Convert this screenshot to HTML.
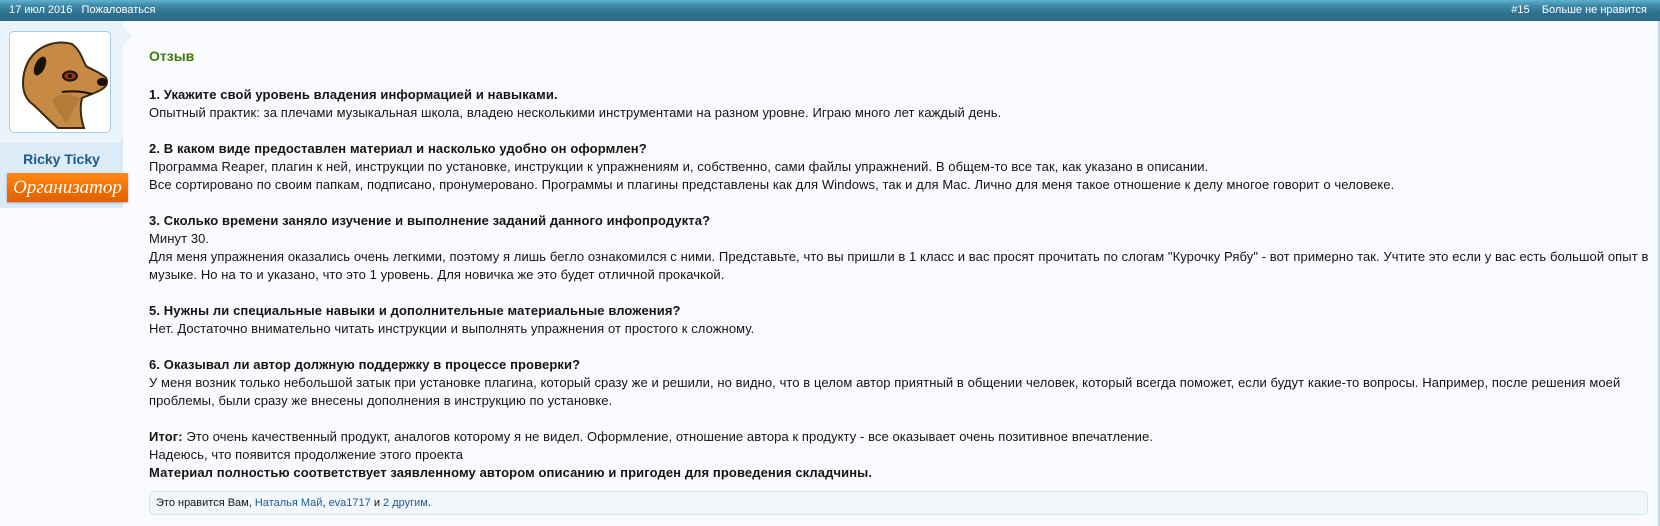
<!DOCTYPE html>
<html><head><meta charset="utf-8"><style>
*{margin:0;padding:0;box-sizing:border-box}
body{width:1660px;height:526px;background:#fafbfe;font-family:"Liberation Sans",Arial,sans-serif;position:relative;overflow:hidden;color:#141414}
.bar{position:absolute;left:0;top:0;width:1660px;height:21px;background:linear-gradient(#5fb3cf 0,#3f8bab 25%,#2f7190 60%,#2c6a89 100%);color:#fff;font-size:11px;line-height:21px}
.bar .l{position:absolute;left:9px}
.bar .r{position:absolute;right:13px}
.side{position:absolute;left:0;top:21px;width:123px;height:187px;background:#dcebf8}
.top{position:absolute;left:0;top:0;width:123px;height:122px;background:#e9f3fc;border-radius:0 0 8px 0}
.av{position:absolute;left:9px;top:10px;width:102px;height:102px;background:#fff;border:1px solid #a9c9e4;border-radius:5px}
.name{position:absolute;left:0;top:130px;width:123px;text-align:center;font-weight:bold;font-size:14px;color:#1d5a88}
.badge{position:absolute;left:7px;top:152px;width:121px;height:29px;background:linear-gradient(#ff8a1a,#f06c00 60%,#e06000);color:#fff;font-family:"Liberation Serif",serif;font-style:italic;font-size:19px;text-align:center;line-height:29px;box-shadow:0 1px 2px rgba(0,0,0,.3)}
.arrow{position:absolute;left:123px;top:26px;width:0;height:0;border-top:10px solid transparent;border-bottom:10px solid transparent;border-left:9px solid #e9f3fc}
.rline{position:absolute;left:1658px;top:21px;width:2px;height:505px;background:#c5d6e6}
.c{position:absolute;left:149px;top:0;width:1500px;font-size:13px;line-height:18px}
.t{position:absolute;top:47px;left:0;color:#417b06;font-size:14px;font-weight:bold}
.txt{position:absolute;top:86px;left:0;width:1500px;letter-spacing:0.08px}
.txt b{font-weight:bold;letter-spacing:0.1px}
.like{position:absolute;left:149px;top:491px;width:1499px;height:24px;border:1px solid #d4e4f3;border-radius:5px;background:#f2f7fc;font-size:11px;line-height:22px;padding-left:6px}
.like a{color:#1d5a96;text-decoration:none}
</style></head><body>
<div class="bar"><span class="l">17 июл 2016&nbsp;&nbsp;&nbsp;Пожаловаться</span><span class="r">#15&nbsp;&nbsp;&nbsp;&nbsp;Больше не нравится</span></div>
<div class="side"><div class="top"></div>
<div class="av"><svg width="100" height="100" viewBox="0 0 100 100">
<path d="M62 12 C48 8 28 12 18 30 C12 42 10 60 20 70 C30 78 38 88 48 96 L74 96 C70 84 70 74 72 66 L82 62 C92 58 100 54 96 46 C90 40 82 38 76 34 C72 26 70 18 62 12Z" fill="#c68a45" stroke="#3a2a10" stroke-width="2"/>
<path d="M70 66 C60 62 50 60 44 66 C40 70 50 80 56 92" fill="#a67233" opacity=".6"/>
<ellipse cx="30" cy="34" rx="5" ry="10" fill="#1a1208" transform="rotate(25 30 34)"/>
<ellipse cx="60" cy="44" rx="7" ry="4.5" fill="#8a3a10" stroke="#1a1208" stroke-width="2"/>
<circle cx="60" cy="44" r="2" fill="#1a1208"/>
<ellipse cx="92" cy="50" rx="5" ry="4" fill="#1a1208"/>
<path d="M52 60 Q68 58 82 62" stroke="#1a1208" stroke-width="2" fill="none"/>
</svg></div>
<div class="name">Ricky Ticky</div>
<div class="badge">Организатор</div>
</div>
<div class="arrow"></div>
<div class="rline"></div>
<div class="c">
<div class="t">Отзыв</div>
<div class="txt">
<b>1. Укажите свой уровень владения информацией и навыками.</b><br>
Опытный практик: за плечами музыкальная школа, владею несколькими инструментами на разном уровне. Играю много лет каждый день.<br><br>
<b>2. В каком виде предоставлен материал и насколько удобно он оформлен?</b><br>
Программа Reaper, плагин к ней, инструкции по установке, инструкции к упражнениям и, собственно, сами файлы упражнений. В общем-то все так, как указано в описании.<br>
Все сортировано по своим папкам, подписано, пронумеровано. Программы и плагины представлены как для Windows, так и для Mac. Лично для меня такое отношение к делу многое говорит о человеке.<br><br>
<b>3. Сколько времени заняло изучение и выполнение заданий данного инфопродукта?</b><br>
Минут 30.<br>
Для меня упражнения оказались очень легкими, поэтому я лишь бегло ознакомился с ними. Представьте, что вы пришли в 1 класс и вас просят прочитать по слогам "Курочку Рябу" - вот примерно так. Учтите это если у вас есть большой опыт в музыке. Но на то и указано, что это 1 уровень. Для новичка же это будет отличной прокачкой.<br><br>
<b>5. Нужны ли специальные навыки и дополнительные материальные вложения?</b><br>
Нет. Достаточно внимательно читать инструкции и выполнять упражнения от простого к сложному.<br><br>
<b>6. Оказывал ли автор должную поддержку в процессе проверки?</b><br>
У меня возник только небольшой затык при установке плагина, который сразу же и решили, но видно, что в целом автор приятный в общении человек, который всегда поможет, если будут какие-то вопросы. Например, после решения моей проблемы, были сразу же внесены дополнения в инструкцию по установке.<br><br>
<b>Итог:</b> Это очень качественный продукт, аналогов которому я не видел. Оформление, отношение автора к продукту - все оказывает очень позитивное впечатление.<br>
Надеюсь, что появится продолжение этого проекта<br>
<b>Материал полностью соответствует заявленному автором описанию и пригоден для проведения складчины.</b>
</div></div>
<div class="like">Это нравится Вам, <a>Наталья Май</a>, <a>eva1717</a> и <a>2 другим</a>.</div>
</body></html>
